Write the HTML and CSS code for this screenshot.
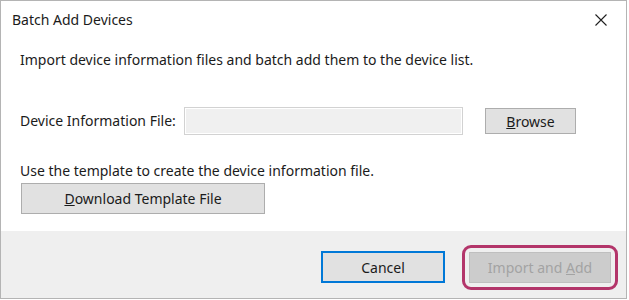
FILE: index.html
```html
<!DOCTYPE html>
<html lang="en">
<head>
  <meta charset="UTF-8">
  <title>Batch Add Devices</title>
  <link rel="stylesheet" href="styles.css">
</head>
<body>
  <div class="dialog">
    <!-- Title Bar -->
    <div class="title-bar">
      <span class="title">Batch Add Devices</span>
      <button class="close-btn" aria-label="Close">
        <svg width="12" height="12" viewBox="0 0 12 12">
          <path d="M0.5 0.5 L11.5 11.5 M11.5 0.5 L0.5 11.5" stroke="#1f1f1f" stroke-width="1.1" fill="none"/>
        </svg>
      </button>
    </div>

    <!-- Main Content -->
    <div class="content">
      <p class="intro">Import device information files and batch add them to the device list.</p>

      <div class="file-row">
        <label for="device-file">Device Information File:</label>
        <input type="text" id="device-file" readonly>
        <button class="btn browse-btn"><u>B</u>rowse</button>
      </div>

      <p class="template-note">Use the template to create the device information file.</p>
      <button class="btn template-btn"><u>D</u>ownload Template File</button>
    </div>

    <!-- Footer -->
    <div class="footer">
      <button class="btn cancel-btn">Cancel</button>
      <span class="highlight">
        <button class="btn import-btn" disabled>Import and <u>A</u>dd</button>
      </span>
    </div>
  </div>
</body>
</html>
```

FILE: styles.css
```css
/* General Styles */
* {
  margin: 0;
  padding: 0;
  box-sizing: border-box;
}

body {
  background-color: #ffffff;
  font-family: 'Noto Sans', 'Open Sans', sans-serif;
  font-size: 14px;
  color: #1b1b1b;
}

/* Dialog Window */
.dialog {
  width: 627px;
  height: 299px;
  border: 1px solid #b4b4b4;
  background: #ffffff;
  display: flex;
  flex-direction: column;
}

/* Title Bar */
.title-bar {
  height: 38px;
  padding: 10px 12px 10px 11px;
  display: flex;
  justify-content: space-between;
  align-items: flex-start;
}

.title {
  line-height: 18px;
}

.close-btn {
  background: none;
  border: none;
  width: 14px;
  height: 14px;
  margin: 2px 6px 0 0;
  display: flex;
  align-items: center;
  justify-content: center;
}

/* Content */
.content {
  flex: 1;
  padding: 0 19px;
}

.intro {
  margin-top: 12px;
  line-height: 18px;
}

.file-row {
  margin-top: 38px;
  height: 28px;
  display: flex;
  align-items: center;
}

.file-row label {
  width: 164px;
  line-height: 18px;
}

.file-row input {
  width: 279px;
  height: 28px;
  border: 1px solid #d2d2d2;
  box-shadow: inset 0 0 0 1px #ffffff;
  background: #f0f0f0;
  outline: none;
}

.template-note {
  margin-top: 27px;
  line-height: 18px;
}

/* Buttons */
.btn {
  font-family: inherit;
  font-size: 14px;
  color: #1b1b1b;
  background: #e1e1e1;
  border: 1px solid #adadad;
}

.browse-btn {
  width: 91px;
  height: 26px;
  margin-left: 22px;
}

.template-btn {
  margin-top: 3px;
  margin-left: 1px;
  width: 244px;
  height: 31px;
}

/* Footer */
.footer {
  height: 67px;
  background: #efefef;
  display: flex;
  justify-content: flex-end;
  align-items: center;
  padding: 5px 8px 0 0;
}

.cancel-btn {
  width: 124px;
  height: 32px;
  border: 2px solid #0078d7;
}

.highlight {
  margin-left: 17px;
  padding: 4px;
  border: 3px solid #b3356a;
  border-radius: 9px;
  display: flex;
}

.import-btn {
  width: 142px;
  height: 31px;
  background: #cccccc;
  border-color: #bfbfbf;
  color: #a3a3a3;
}
```
